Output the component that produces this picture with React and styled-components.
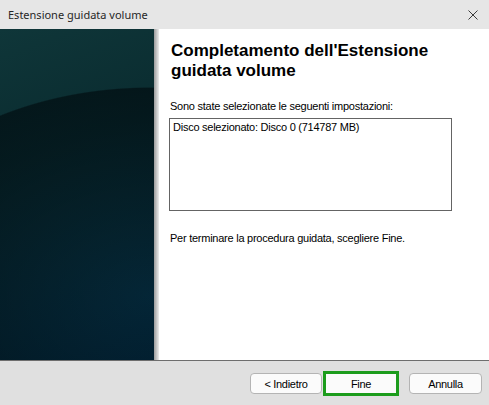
import React from 'react';
import styled, { createGlobalStyle } from 'styled-components';

const GlobalStyle = createGlobalStyle`
  html, body {
    margin: 0;
    padding: 0;
    background: #e0e0e0;
  }
`;

const Window = styled.div`
  width: 489px;
  height: 405px;
  display: flex;
  flex-direction: column;
  overflow: hidden;
  font-family: 'Liberation Sans', Arial, sans-serif;
`;

const TitleBar = styled.div`
  height: 29px;
  flex: none;
  display: flex;
  align-items: center;
  justify-content: space-between;
  padding: 0 6px 0 8px;
  background: #e6e6e6;
`;

const Title = styled.span`
  font-family: 'Noto Sans', 'Open Sans', sans-serif;
  font-size: 11px;
  color: #262626;
`;

const CloseButton = styled.div`
  width: 10px;
  height: 10px;
  display: flex;
  margin-right: 5px;
`;

const Body = styled.div`
  flex: 1;
  display: flex;
  min-height: 0;
`;

const SidePanel = styled.div`
  width: 154px;
  flex: none;
  background:
    radial-gradient(ellipse 300px 209px at 150px 267px, rgba(0, 30, 50, 0.2) 0%, rgba(0, 10, 14, 0.65) 99.4%, transparent 100%),
    linear-gradient(160deg, #0f3639 0%, #0a2c30 35%, #03263a 100%);
`;

const Edge = styled.div`
  width: 5px;
  flex: none;
  background: linear-gradient(90deg, #9c9c9c 0%, #c4c4c4 50%, #ececec 100%);
`;

const Content = styled.div`
  flex: 1;
  background: #fff;
  padding: 12px 0 0 11px;
  display: flex;
  flex-direction: column;
`;

const Heading = styled.h1`
  margin: 0 0 0 1px;
  font-family: 'Liberation Sans', Arial, sans-serif;
  font-weight: 700;
  font-size: 17px;
  line-height: 20px;
  color: #000;
`;

const Text = styled.p`
  margin: ${(p) => p.$mt || 0}px 0 0 0;
  font-size: 11px;
  line-height: 13px;
  color: #000;
  letter-spacing: -0.25px;
`;

const ListBox = styled.div`
  margin: 5px 0 0 -1px;
  width: 283px;
  height: 93px;
  box-sizing: border-box;
  border: 1px solid #646464;
  padding: 2px 3px;
  font-size: 11px;
  line-height: 13px;
  letter-spacing: -0.25px;
  color: #000;
`;

const Footer = styled.div`
  height: 45px;
  flex: none;
  box-sizing: border-box;
  border-top: 1px solid #6e6e6e;
  background: #e0e0e0;
  display: flex;
  align-items: center;
  justify-content: flex-end;
  padding: 1px 7px 0 0;
`;

const Button = styled.button`
  box-sizing: border-box;
  width: ${(p) => p.$w || 72}px;
  height: ${(p) => (p.$primary ? 25 : 21)}px;
  margin-left: ${(p) => p.$ml || 0}px;
  padding: 0;
  border: ${(p) => (p.$primary ? '3px solid #1c9c1c' : '1px solid #b4b4b4')};
  border-radius: ${(p) => (p.$primary ? 0 : 4)}px;
  background: #fbfbfb;
  font-family: 'Liberation Sans', Arial, sans-serif;
  font-size: 11px;
  letter-spacing: -0.3px;
  color: #000;
`;

export default function App() {
  return (
    <>
      <GlobalStyle />
      <Window>
        <TitleBar>
          <Title>Estensione guidata volume</Title>
          <CloseButton>
            <svg width="10" height="10" viewBox="0 0 10 10">
              <path d="M0.5 0.5 L9.5 9.5 M9.5 0.5 L0.5 9.5" stroke="#3a3a3a" strokeWidth="1" fill="none" />
            </svg>
          </CloseButton>
        </TitleBar>
        <Body>
          <SidePanel />
          <Edge />
          <Content>
            <Heading>
              Completamento dell'Estensione
              <br />
              guidata volume
            </Heading>
            <Text $mt={19}>Sono state selezionate le seguenti impostazioni:</Text>
            <ListBox>Disco selezionato: Disco 0 (714787 MB)</ListBox>
            <Text $mt={21}>Per terminare la procedura guidata, scegliere Fine.</Text>
          </Content>
        </Body>
        <Footer>
          <Button>&lt; Indietro</Button>
          <Button $primary $w={76} $ml={1}>Fine</Button>
          <Button $w={73} $ml={10}>Annulla</Button>
        </Footer>
      </Window>
    </>
  );
}
